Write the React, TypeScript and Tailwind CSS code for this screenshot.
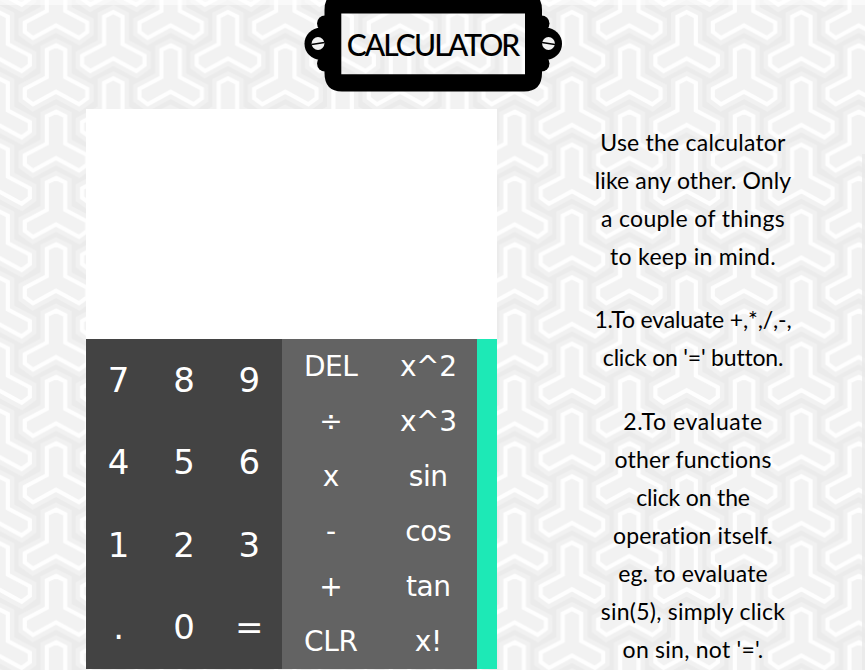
const TRIPOD =
  "M0 0 L9.2 4.6 V32 L31.2 43.5 V53 L23 59 L0 46.5 L-23 59 L-31.2 53 V43.5 L-9.2 32 V4.6 Z";

// Tripod origins inside one repeat, with the neighbours that spill over its edges.
const ORIGINS: [number, number][] = [];
for (let row = -2; row <= 1; row++) {
  for (let col = -1; col <= 1; col++) {
    ORIGINS.push([56 + col * 114.67, 45.3 + row * 66.33]);
    ORIGINS.push([113.3 + col * 114.67, 12.1 + row * 66.33]);
  }
}

function Wallpaper() {
  return (
    <svg className="absolute inset-0 -z-10 h-full w-full" aria-hidden="true">
      <defs>
        <pattern id="tripods" width="114.67" height="66.33" patternUnits="userSpaceOnUse">
          <rect width="115" height="67" fill="#ebebeb" />
          {ORIGINS.map(([x, y], i) => (
            <path
              key={i}
              d={TRIPOD}
              transform={`translate(${x} ${y})`}
              fill="#f2f2f2"
              stroke="#f1f1f1"
              strokeWidth="13"
            />
          ))}
          {ORIGINS.map(([x, y], i) => (
            <path
              key={i}
              d={TRIPOD}
              transform={`translate(${x} ${y})`}
              fill="#f2f2f2"
              stroke="#fefefe"
              strokeWidth="4.2"
            />
          ))}
        </pattern>
      </defs>
      <rect width="100%" height="100%" fill="url(#tripods)" />
      <rect width="100%" height="5" fill="#fff" opacity="0.5" />
      <rect x="862" y="154" width="3" height="516" fill="#e9e9e9" opacity="0.8" />
    </svg>
  );
}

function NamePlate() {
  return (
    <header className="relative ml-[304px] flex h-[92px] w-[258px] items-center justify-center">
      <svg className="absolute inset-0" width="258" height="92" viewBox="0 0 258 92" aria-hidden="true">
        <path
          fillRule="evenodd"
          d="M38 -8 H220 Q238 -8 238 10 V73 Q238 91.500 220 91.500 H38 Q20.500 91.500 20.500 73 V10 Q20.500 -8 38 -8 Z M37.300 13.500 V74.300 H221 V13.500 Z"
        />
        <circle cx="21" cy="23.500" r="8" />
        <circle cx="21" cy="63.500" r="8" />
        <circle cx="16.500" cy="43.700" r="16" />
        <circle cx="237.500" cy="23.500" r="8" />
        <circle cx="237.500" cy="63.500" r="8" />
        <circle cx="242" cy="43.700" r="16" />
        <circle cx="14" cy="43.500" r="6.400" fill="#f2f2f2" />
        <circle cx="244.500" cy="43.500" r="6.400" fill="#f2f2f2" />
        <path d="M7.500 44.500 L20.500 42.500 M238 42.500 L251 44.500" stroke="#000" strokeWidth="1.400" />
      </svg>
      <h1 className="relative pb-1 pr-px font-['Lato','Open_Sans',sans-serif] text-[30px] font-medium leading-none tracking-[-1.9px] text-black">
        CALCULATOR
      </h1>
    </header>
  );
}

const DIGITS = ["7", "8", "9", "4", "5", "6", "1", "2", "3", ".", "0", "="];
const OPERATIONS = ["DEL", "x^2", "÷", "x^3", "x", "sin", "-", "cos", "+", "tan", "CLR", "x!"];

function Calculator() {
  return (
    <section className="w-[411px] shrink-0 font-['DejaVu_Sans',sans-serif] text-white">
      <div className="h-[230px] bg-white" />
      <div className="flex h-[330px]">
        <div className="grid w-[196px] grid-cols-3 grid-rows-4 bg-[#434343] text-[34px] leading-none">
          {DIGITS.map((label) => (
            <button key={label} className="flex items-center justify-center pb-[1px]">
              {label}
            </button>
          ))}
        </div>
        <div className="grid w-[195px] grid-cols-2 grid-rows-6 bg-[#636363] text-[28px] leading-none tracking-[-0.4px]">
          {OPERATIONS.map((label) => (
            <button key={label} className="flex items-center justify-center">
              {label}
            </button>
          ))}
        </div>
        <div className="w-5 bg-[#1de9b6]" />
      </div>
    </section>
  );
}

const NOTES = [
  [
    { text: "Use the calculator", tracking: "tracking-[0.22px]" },
    { text: "like any other. Only", tracking: "tracking-[0.1px]" },
    { text: "a couple of things", tracking: "tracking-[0.34px]" },
    { text: "to keep in mind.", tracking: "tracking-[0.3px]" },
  ],
  [
    { text: "1.To evaluate +,*,/,-,", tracking: "tracking-[-0.15px]" },
    { text: "click on '=' button.", tracking: "tracking-[-0.2px]" },
  ],
  [
    { text: "2.To evaluate", tracking: "tracking-[0.6px]" },
    { text: "other functions", tracking: "tracking-[0.2px]" },
    { text: "click on the", tracking: "tracking-[-0.15px]" },
    { text: "operation itself.", tracking: "tracking-[0.15px]" },
    { text: "eg. to evaluate", tracking: "tracking-[0.15px]" },
    { text: "sin(5), simply click", tracking: "tracking-[0.25px]" },
    { text: "on sin, not '='.", tracking: "tracking-[0.25px]" },
  ],
];

export default function App() {
  return (
    <main className="relative isolate h-[670px] w-[865px] overflow-hidden">
      <Wallpaper />
      <NamePlate />
      <div className="flex pl-[86px] pt-[17px]">
        <Calculator />
        <aside className="ml-[81px] mt-[14px] flex w-[230px] flex-col gap-[25.4px] text-center font-['Lato','Open_Sans',sans-serif] text-[23px] leading-[38px] text-black">
          {NOTES.map((lines) => (
            <p key={lines[0].text}>
              {lines.map(({ text, tracking }) => (
                <span key={text} className={`block whitespace-nowrap ${tracking}`}>
                  {text}
                </span>
              ))}
            </p>
          ))}
        </aside>
      </div>
    </main>
  );
}
